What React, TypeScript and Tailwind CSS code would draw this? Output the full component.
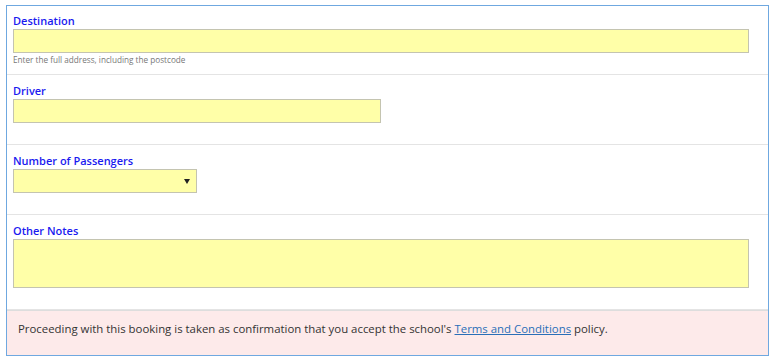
export default function App() {
  return (
    <div className="bg-white w-[776px] h-[361px] pt-[5px] pl-[6px]" style={{ fontFamily: '"Open Sans", sans-serif' }}>
      <div className="w-[763px] border border-[#6fa8e0] bg-white">
        <Section first label="Destination" help="Enter the full address, including the postcode">
          <div className="w-[736px] h-[24px] bg-[#ffffa8] border border-[#c4c4b0]" />
        </Section>
        <Section label="Driver">
          <div className="w-[368px] h-[24px] bg-[#ffffa8] border border-[#c4c4b0]" />
        </Section>
        <Section label="Number of Passengers">
          <div className="w-[184px] h-[24px] bg-[#ffffa8] border border-[#c4c4b0] flex items-center justify-end pr-[6px]">
            <span className="block w-0 h-0 border-l-[3px] border-r-[3px] border-t-[5px] border-l-transparent border-r-transparent border-t-[#222]" />
          </div>
        </Section>
        <Section label="Other Notes">
          <div className="w-[736px] h-[49px] bg-[#ffffa8] border border-[#c4c4b0]" />
        </Section>
        <div className="h-[45px] bg-[#fdeaea] border-t border-[#dddddd] pl-[11px] pt-[10px] text-[11.4px] leading-[16px] text-[#333]">
          Proceeding with this booking is taken as confirmation that you accept the school's{' '}
          <a href="#" className="text-[#2a6fb8] underline">Terms and Conditions</a> policy.
        </div>
      </div>
    </div>
  );
}

function Section({ label, help, first, children }: { label: string; help?: string; first?: boolean; children: React.ReactNode }) {
  return (
    <div className={`pl-[6px] pr-[7px] pb-[7px] border-b border-[#e4e4e4] ${first ? 'pt-[7px]' : 'pt-[8px]'}`}>
      <div className="h-[16px] text-[11px] leading-[16px] font-semibold text-[#1a1af0]">{label}</div>
      {children}
      <div className="h-[14px] pt-[1px] text-[8.2px] leading-[12px] text-[#777]">{help}</div>
    </div>
  );
}
